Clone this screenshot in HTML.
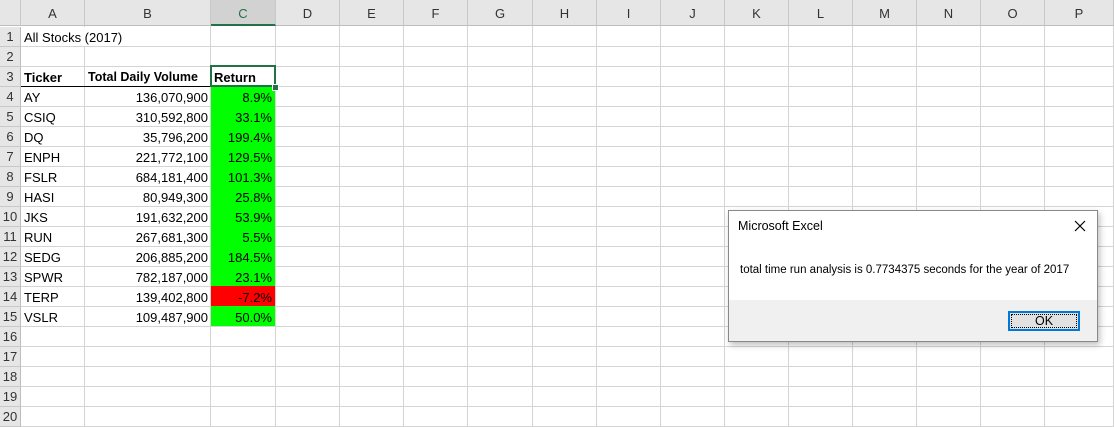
<!DOCTYPE html><html><head><style>
body{margin:0;width:1114px;height:423px;overflow:hidden;background:#fff;font-family:"Liberation Sans",Calibri,sans-serif;position:relative}
.a{position:absolute}
.ch{top:0;height:26px;background:#e6e6e6;border-right:1px solid #c8c8c8;border-bottom:1px solid #bdbdbd;box-sizing:border-box;font-size:13px;color:#333;text-align:center;line-height:28px}
.rh{left:0;width:21px;height:20px;background:#e6e6e6;border-bottom:1px solid #c8c8c8;border-right:1px solid #bdbdbd;box-sizing:border-box;font-size:13px;color:#333;text-align:center;line-height:20px}
.c{height:19px;line-height:21px;font-size:13px;color:#000;white-space:nowrap}
</style></head><body>
<div id="g"></div>
<script>
var cols=[21,85,211,276,340,404,468,533,597,661,725,789,853,917,981,1045,1114];
var L="ABCDEFGHIJKLMNOP",h="";
h+='<div class="a ch" style="left:0;width:21px"></div>';
for(var i=0;i<16;i++){var w=cols[i+1]-cols[i];var st=i==2?'background:#d2d2d2;border-bottom:2px solid #217346;color:#217346':'';h+='<div class="a ch" style="left:'+cols[i]+'px;width:'+w+'px;'+st+'">'+L[i]+'</div>';
h+='<div class="a" style="left:'+(cols[i+1]-1)+'px;top:26px;width:1px;height:400px;background:#d4d4d4"></div>';}
for(var r=1;r<=20;r++){var y=27+(r-1)*20;h+='<div class="a rh" style="top:'+y+'px">'+r+'</div>';h+='<div class="a" style="left:21px;top:'+(y+19)+'px;width:1093px;height:1px;background:#d4d4d4"></div>';}
var d=[["AY","136,070,900","8.9%"],["CSIQ","310,592,800","33.1%"],["DQ","35,796,200","199.4%"],["ENPH","221,772,100","129.5%"],["FSLR","684,181,400","101.3%"],["HASI","80,949,300","25.8%"],["JKS","191,632,200","53.9%"],["RUN","267,681,300","5.5%"],["SEDG","206,885,200","184.5%"],["SPWR","782,187,000","23.1%"],["TERP","139,402,800","-7.2%"],["VSLR","109,487,900","50.0%"]];
h+='<div class="a c" style="left:21px;padding-left:3px;width:120px;background:#fff;top:27px">All Stocks (2017)</div>';
h+='<div class="a c" style="left:24px;top:67px;font-weight:bold">Ticker</div><div class="a c" style="left:88px;top:67px;font-weight:bold;font-size:12.5px">Total Daily Volume</div><div class="a c" style="left:214px;top:67px;font-weight:bold">Return</div>';
h+='<div class="a" style="left:21px;top:86px;width:190px;height:1px;background:#000"></div>';
for(var k=0;k<12;k++){var y=87+k*20;h+='<div class="a" style="left:211px;top:'+(y-1)+'px;width:64px;height:20px;background:'+(k==10?'#ff0000':'#00ff00')+'"></div>';
h+='<div class="a c" style="left:24px;top:'+y+'px">'+d[k][0]+'</div><div class="a c" style="left:85px;width:123px;text-align:right;top:'+y+'px">'+d[k][1]+'</div><div class="a c" style="left:211px;width:61px;text-align:right;top:'+y+'px">'+d[k][2]+'</div>';}
h+='<div class="a" style="left:210px;top:65px;width:62px;height:18px;border:2px solid #217346"></div><div class="a" style="left:272px;top:84px;width:5px;height:5px;background:#217346;border:1px solid #fff"></div>';
document.getElementById("g").innerHTML=h;
</script>
<div class="a" style="left:728px;top:210px;width:370px;height:132px;background:#fff;border:1px solid #888;box-shadow:2px 3px 6px rgba(0,0,0,.25);box-sizing:border-box">
<div class="a" style="left:9px;top:8px;font-size:12.5px;color:#000">Microsoft Excel</div>
<svg class="a" style="left:345px;top:9px" width="12" height="12"><path d="M1 1L11 11M11 1L1 11" stroke="#000" stroke-width="1.2"/></svg>
<div class="a" style="left:11px;top:53px;font-size:11.5px;color:#000">total time run analysis is 0.7734375 seconds for the year of 2017</div>
<div class="a" style="left:0;top:89px;width:368px;height:41px;background:#f0f0f0"></div>
<div class="a" style="left:279px;top:100px;width:72px;height:20px;background:#e1e1e1;border:2px solid #0078d7;box-sizing:border-box;font-size:12.5px;text-align:center;line-height:16px"><div style="position:absolute;inset:1px;border:1px dotted #000"></div>OK</div>
</div>
</body></html>
